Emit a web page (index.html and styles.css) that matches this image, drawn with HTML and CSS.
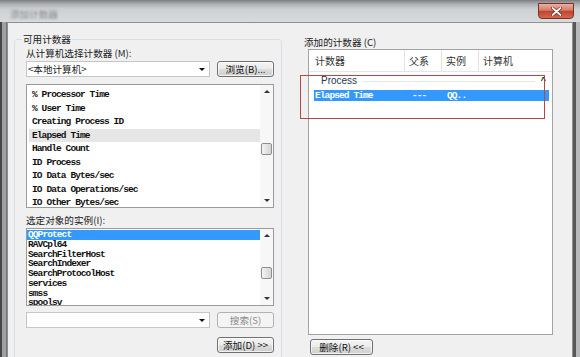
FILE: index.html
```html
<!DOCTYPE html>
<html lang="zh-CN">
<head>
    <meta charset="UTF-8">
    <title>添加计数器</title>
    <link rel="stylesheet" href="styles.css">
</head>
<body>
<div class="window">
    <div class="titlebar">
        <span class="title">添加计数器</span>
        <div class="close-btn">
            <svg width="11" height="9" viewBox="0 0 11 9">
                <path d="M1.5 1 L9.5 8 M9.5 1 L1.5 8" stroke="#5a1a12" stroke-width="3" stroke-linecap="round"/>
                <path d="M1.5 1 L9.5 8 M9.5 1 L1.5 8" stroke="#fff" stroke-width="1.8" stroke-linecap="round"/>
            </svg>
        </div>
    </div>
    <div class="frame">
        <div class="client">
            <fieldset class="group">
                <legend>可用计数器</legend>
                <div class="label">从计算机选择计数器 (M):</div>
                <div class="row">
                    <div class="combo"><span>&lt;本地计算机&gt;</span><i class="drop"></i></div>
                    <button class="btn">浏览(B)...</button>
                </div>
                <div class="listbox counters">
                    <ul class="items">
                        <li>% Processor Time</li>
                        <li>% User Time</li>
                        <li>Creating Process ID</li>
                        <li class="hover">Elapsed Time</li>
                        <li>Handle Count</li>
                        <li>ID Process</li>
                        <li>IO Data Bytes/sec</li>
                        <li>IO Data Operations/sec</li>
                        <li>IO Other Bytes/sec</li>
                    </ul>
                    <div class="vscroll">
                        <div class="arrow"><i class="up"></i></div>
                        <div class="track"><div class="thumb"></div></div>
                        <div class="arrow"><i class="down"></i></div>
                    </div>
                </div>
                <div class="label second">选定对象的实例(I):</div>
                <div class="listbox instances">
                    <ul class="items">
                        <li class="sel">QQProtect</li>
                        <li>RAVCpl64</li>
                        <li>SearchFilterHost</li>
                        <li>SearchIndexer</li>
                        <li>SearchProtocolHost</li>
                        <li>services</li>
                        <li>smss</li>
                        <li>spoolsv</li>
                    </ul>
                    <div class="vscroll">
                        <div class="arrow"><i class="up"></i></div>
                        <div class="track"><div class="thumb"></div></div>
                        <div class="arrow"><i class="down"></i></div>
                    </div>
                </div>
                <div class="row search-row">
                    <div class="combo"><span></span><i class="drop"></i></div>
                    <button class="btn" disabled>搜索(S)</button>
                </div>
                <div class="row add-row">
                    <button class="btn">添加(D) &gt;&gt;</button>
                </div>
            </fieldset>

            <div class="added">
                <div class="label">添加的计数器 (C)</div>
                <div class="listview">
                    <div class="lv-head">
                        <span class="c1">计数器</span>
                        <span class="c2">父系</span>
                        <span class="c3">实例</span>
                        <span class="c4">计算机</span>
                    </div>
                    <div class="lv-group">
                        <span class="name">Process</span>
                        <i class="rule"></i>
                        <span class="chev">^</span>
                    </div>
                    <div class="lv-row sel">
                        <span class="r1">Elapsed Time</span>
                        <span class="r2">---</span>
                        <span class="r3">QQ..</span>
                    </div>
                </div>
                <div class="mark"></div>
                <button class="btn remove">删除(R) &lt;&lt;</button>
            </div>
        </div>
    </div>
</div>
</body>
</html>
```

FILE: styles.css
```css
body {
    margin: 0;
    overflow: hidden;
    font-family: "Noto Sans CJK SC", "Liberation Sans", sans-serif;
    font-size: 9.6px;
    color: #1b1b1b;
}
.window {
    width: 580px;
    height: 357px;
    display: flex;
    flex-direction: column;
    overflow: hidden;
}
.titlebar {
    height: 22px;
    flex: none;
    display: flex;
    justify-content: space-between;
    align-items: flex-start;
    padding: 0 6px 0 10px;
    box-sizing: border-box;
    background: linear-gradient(#7b7d80 0, #abadb0 4px, #cdd0d2 9px, #d8dadc 22px);
}
.title {
    margin-top: 7px;
    color: #8a8c8f;
    filter: blur(1.3px);
}
.close-btn {
    width: 36px;
    height: 16px;
    margin-top: 3px;
    box-sizing: border-box;
    border: 1px solid #7c3126;
    border-radius: 0 0 4px 4px;
    background: linear-gradient(#eab0a4, #d67a68 45%, #c2432f 52%, #cf6a4e);
    display: flex;
    align-items: center;
    justify-content: center;
}
.frame {
    flex: 1;
    display: flex;
    padding: 0 7px;
    background: linear-gradient(90deg, #474747 0 2px, #9fa1a4 2px 6px, #727477 6px 7px, #eeeeee 7px 573px, #575757 573px 576px, #b7b9bb 576px);
}
.client {
    flex: 1;
    display: flex;
    align-items: flex-start;
    border: 1px solid #8d9093;
    border-bottom: 0;
    background: #f0f0f0;
}

/* left group */
.group {
    width: 268px;
    min-width: 0;
    box-sizing: border-box;
    margin: 11px 0 0 6px;
    padding: 0 7px 8px 11px;
    border: 1px solid #d5dfe5;
    border-radius: 3px;
    display: flex;
    flex-direction: column;
}
.group legend {
    margin-left: -4px;
    padding: 0 1px;
    line-height: 11px;
}
.label {
    line-height: 12px;
    margin-top: 2px;
    white-space: nowrap;
}
.label.second {
    margin-top: 6px;
}
.row {
    display: flex;
    justify-content: space-between;
    height: 16px;
    margin-top: 2px;
}
.search-row {
    margin-top: 6px;
}
.add-row {
    margin-top: 9px;
    justify-content: flex-end;
}
.combo {
    width: 184px;
    height: 16px;
    box-sizing: border-box;
    border: 1px solid #c6c6c6;
    background: #fff;
    display: flex;
    align-items: center;
    padding-left: 1px;
    line-height: 12px;
}
.drop {
    margin-left: auto;
    margin-right: 4px;
    border-left: 3px solid transparent;
    border-right: 3px solid transparent;
    border-top: 3px solid #111;
}
.btn {
    width: 57px;
    height: 16px;
    padding: 0;
    box-sizing: border-box;
    font-family: inherit;
    font-size: 9.6px;
    line-height: 12px;
    color: #111;
    border: 1px solid #707070;
    border-radius: 3px;
    background: linear-gradient(#f4f4f4 0, #ebebeb 50%, #dddddd 50%, #cfcfcf 100%);
    box-shadow: inset 0 0 0 1px rgba(255, 255, 255, 0.7);
}
.btn:disabled {
    color: #8a8a8a;
    border-color: #adb2b5;
    background: #f4f4f4;
    box-shadow: none;
}

/* list boxes */
.listbox {
    display: flex;
    border: 1px solid #9b9b9b;
    background: #fff;
    box-sizing: border-box;
}
.counters {
    height: 124px;
    margin-top: 7px;
}
.instances {
    height: 78px;
    margin-top: 2px;
}
.items {
    flex: 1;
    margin: 0;
    list-style: none;
    overflow: hidden;
    font-family: "Liberation Mono", monospace;
    font-weight: bold;
    font-size: 9.5px;
    letter-spacing: -0.9px;
    color: #111;
    white-space: nowrap;
}
.counters .items {
    padding: 3px 0 0 2px;
    line-height: 13.5px;
}
.counters .items li {
    padding-left: 3px;
}
.instances .items {
    padding: 1px 0 0;
    line-height: 9.75px;
}
.instances .items li {
    padding-left: 1px;
}
.items .hover {
    background: #e6e6e6;
}
.items .sel {
    background: #3399ff;
    color: #fff;
}
.vscroll {
    width: 13px;
    display: flex;
    flex-direction: column;
    background: #f7f7f7;
}
.arrow {
    height: 13px;
    flex: none;
    display: flex;
    align-items: center;
    justify-content: center;
}
.up {
    border-left: 3px solid transparent;
    border-right: 3px solid transparent;
    border-bottom: 3px solid #333;
}
.down {
    border-left: 3px solid transparent;
    border-right: 3px solid transparent;
    border-top: 3px solid #333;
}
.track {
    flex: 1;
}
.thumb {
    width: 11px;
    height: 12px;
    margin-left: 1px;
    box-sizing: border-box;
    border: 1px solid #8e8f8f;
    border-radius: 2px;
    background: linear-gradient(90deg, #f4f4f4, #e3e3e3 50%, #d5d5d5);
}
.counters .thumb {
    margin-top: 45px;
}
.instances .thumb {
    margin-top: 25px;
}

/* right side */
.added {
    position: relative;
    margin: 11px 0 0 22px;
    display: flex;
    flex-direction: column;
    align-items: flex-start;
}
.listview {
    margin: 1px 0 0 4px;
    width: 245px;
    height: 286px;
    box-sizing: border-box;
    border: 1px solid #a3a3a3;
    background: #fff;
}
.lv-head {
    display: flex;
    height: 22px;
    box-sizing: border-box;
    border-bottom: 1px solid #e5e5e5;
    color: #333;
    font-size: 10px;
}
.lv-head span {
    box-sizing: border-box;
    line-height: 21px;
    padding-left: 5px;
    border-right: 1px solid #e3e3e3;
}
.lv-head .c1 {
    width: 96px;
    padding-left: 6px;
}
.lv-head .c2,
.lv-head .c3 {
    width: 37px;
    padding-left: 4px;
}
.lv-head .c4 {
    flex: 1;
    padding-left: 4px;
    border-right: 0;
}
.lv-group {
    display: flex;
    align-items: center;
    height: 16px;
    padding: 0 6px 0 12px;
    font-family: "Liberation Sans", sans-serif;
    font-size: 10px;
    color: #2a3550;
}
.lv-group .rule {
    flex: 1;
    height: 1px;
    margin: 2px 6px 0;
    background: #e4e8ec;
}
.lv-group .chev {
    font-weight: bold;
    font-size: 9px;
    color: #222;
}
.lv-row {
    display: flex;
    margin: 2px 3px 0 5px;
    height: 11px;
    line-height: 11px;
    font-family: "Liberation Mono", monospace;
    font-weight: bold;
    font-size: 9.5px;
    letter-spacing: -0.9px;
    white-space: nowrap;
}
.lv-row.sel {
    background: #3399ff;
    color: #fff;
}
.lv-row .r1 {
    width: 98px;
    padding-left: 1px;
    box-sizing: border-box;
}
.lv-row .r2 {
    width: 35px;
}
.mark {
    position: absolute;
    left: -4px;
    top: 41px;
    width: 245px;
    height: 44px;
    box-sizing: border-box;
    border: 1px solid #b4474a;
}
.remove {
    width: 63px;
    margin: 4px 0 0 6px;
}
```
